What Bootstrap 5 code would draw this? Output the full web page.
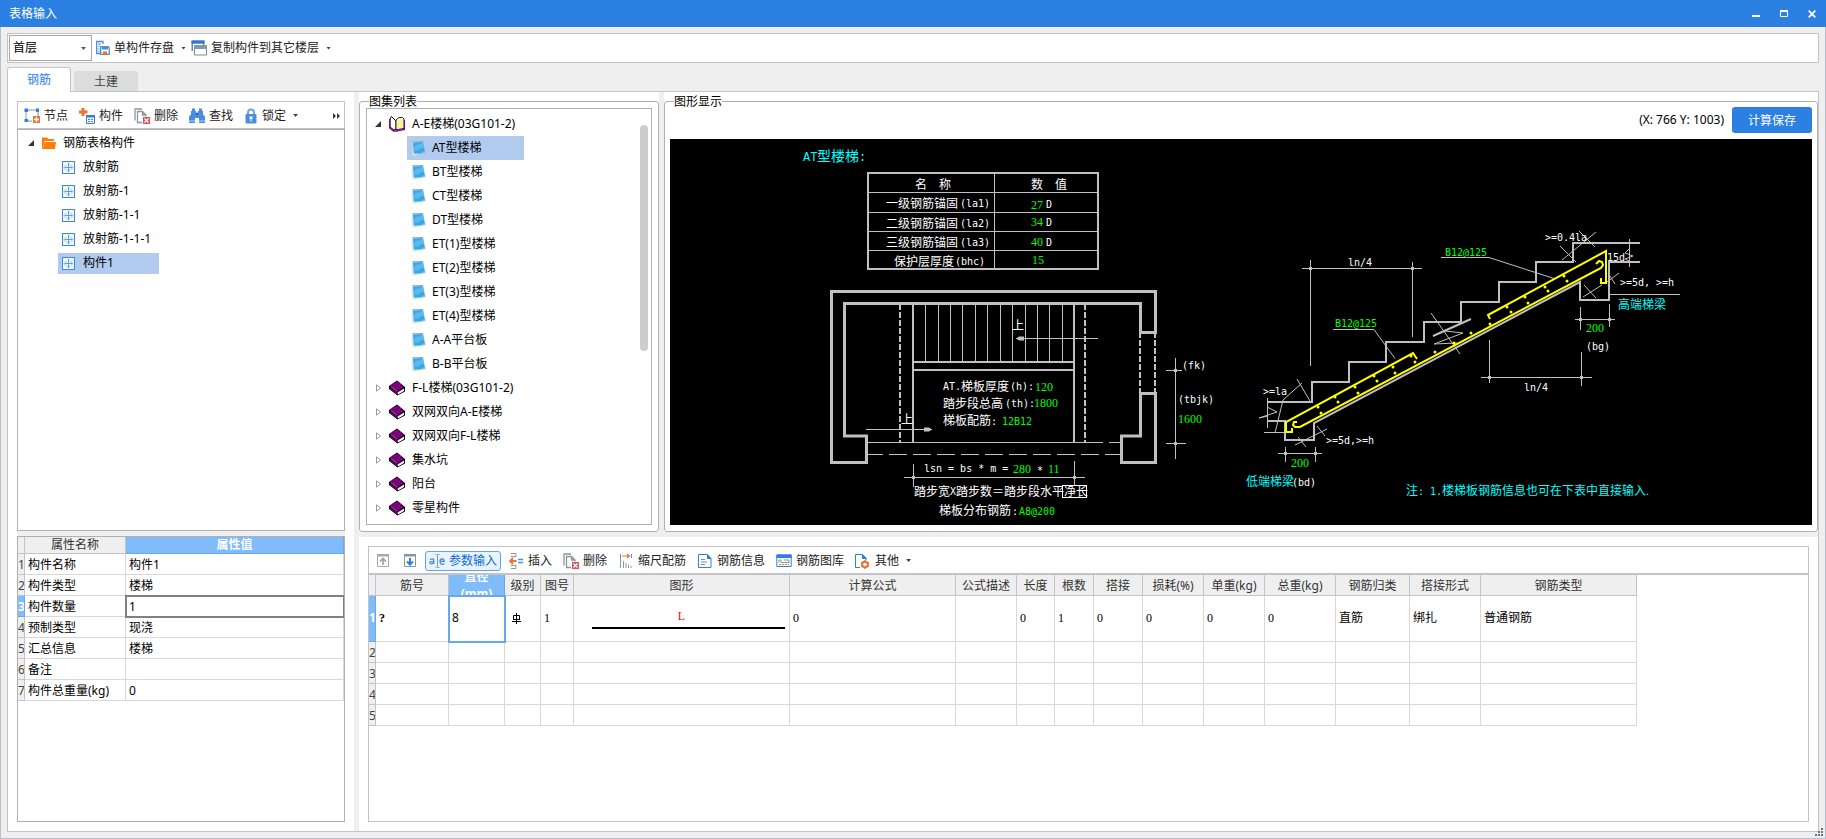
<!DOCTYPE html>
<html lang="zh-CN">
<head>
<meta charset="utf-8">
<meta name="viewport" content="width=device-width, initial-scale=1">
<title>表格输入</title>
<link href="https://cdn.jsdelivr.net/npm/bootstrap@5.3.0/dist/css/bootstrap.min.css" rel="stylesheet">
<style>
  :root { --brand:#2c80e2; --chrome:#efefef; --line:#c3c4c9; --edge:#b0b0b0; --grid:#d8d8d8; --pick:#b1cbee; --head:#80bbfa; }
  html, body { height:100%; }
  body { min-height:700px; font-family:"Noto Sans","Noto Sans CJK SC",sans-serif; font-size:12px; line-height:16px; color:#000; background:var(--chrome); }
  svg { flex:none; display:block; }
  .titlebar { height:27px; background:var(--brand); color:#fff; padding:1px 8px 0 9px; }
  .titlebar h1 { font-size:12px; line-height:16px; font-weight:400; }
  .winbtn { border:0; background:none; color:#fff; padding:0; width:12px; height:16px; display:grid; place-items:center; }
  .frame { border:1px solid #b9bfcf; border-top:0; padding:6px; min-height:0; }
  .topbar { height:30px; border:1px solid var(--line); background:#fff; padding:1px; }
  .floor-pick { width:83px; height:26px; border:1px solid #a8a8a8; border-radius:0; padding:0 16px 0 3px; font-size:12px; line-height:16px; color:#000;
    background:#fff url("data:image/svg+xml,%3Csvg xmlns='http://www.w3.org/2000/svg' width='5' height='3'%3E%3Cpath d='M0 0h5L2.500 3z' fill='%23555'/%3E%3C/svg%3E") no-repeat right 5px center / 5px 3px; }
  .caret { width:5px; height:3px; background:#444; clip-path:polygon(0 0,100% 0,50% 100%); margin-left:3px; }
  .tool { display:flex; align-items:center; gap:4px; height:20px; border:1px solid transparent; border-radius:3px; background:none; padding:0 3px; font-size:12px; line-height:16px; color:#222; white-space:nowrap; }
  .tool.on { border-color:#5ea6f0; background:#e8f3fe; color:#0a6ad8; }
  .toolrow { height:28px; border:1px solid var(--line); background:#fff; padding:1px 2px 0; gap:3px; }
  .tabrow { height:28px; gap:3px; }
  .tabrow .nav-link { font-size:12px; line-height:16px; text-align:center; width:64px; color:#444; background:#dcdcdc; border:0; border-radius:3px 3px 0 0; padding:3px 0 1px; height:20px; }
  .tabrow .nav-link.active { color:var(--brand); background:#fff; border:1px solid var(--line); border-bottom:0; height:25px; margin-bottom:-1px; padding:4px 0; position:relative; }
  .pane { border:1px solid var(--line); min-height:0; }
  .leftcol { width:346px; background:#fff; padding:9px; }
  .vsplit { width:5px; background:var(--chrome); }
  .hsplit { height:5px; background:var(--chrome); }
  .boxed { border:1px solid var(--edge); background:#fff; min-height:0; overflow:hidden; }
  .tree, .tree ul { list-style:none; margin:0; padding:0; }
  .node { display:flex; align-items:center; height:24px; white-space:nowrap; }
  .twist { width:8px; }
  .tree-left { padding-top:1px; }
  .tree-left .node { gap:7px; padding-left:9px; }
  .tree-left ul .node { padding-left:40px; gap:0; }
  .tree-left ul .pickbox { gap:8px; height:21px; padding:0 4px; width:101px; }
  .tree-mid { padding-top:3px; }
  .tree-mid .node { gap:7px; padding-left:7px; }
  .tree-mid ul .node { padding-left:40px; gap:0; }
  .tree-mid ul .pickbox { gap:5px; height:24px; padding:0 4px; width:117px; }
  .pickbox { display:flex; align-items:center; }
  .picked { background:var(--pick); }
  .lowleft { height:286px; }
  .lowright { height:294px; background:#fff; padding:9px; }
  .groupwrap { background:#fff; padding-top:9px; min-height:0; }
  .groupbox { position:relative; border:1px solid var(--edge); border-radius:3px; min-height:0; }
  .grouptitle { position:absolute; top:-8px; left:9px; background:#fff; line-height:16px; }
  .atlas { width:300px; }
  .atlas .groupbox { padding:6px; }
  .thumb { position:absolute; right:3px; top:16px; width:8px; height:226px; border-radius:4px; background:#cdcdcd; }
  .viewer .groupbox { padding:5px 5px 6px; gap:6px; }
  .savebtn { width:80px; height:26px; border:0; border-radius:3px; background:var(--brand); color:#fff; font-size:12px; line-height:16px; padding:1px 0 0; }
  .cad { background:#000; min-height:0; height:0; width:100%; }
  .cad text { font:12px "Liberation Serif","Noto Sans CJK SC",serif; fill:#fff; }
  .cad .mono { font:10px "DejaVu Sans Mono","Noto Sans CJK SC",monospace; }
  .cad .big { font-size:14px; }
  .cad .bigmono { font:12px "Liberation Mono",monospace; }
  .cad .g { fill:#0f0; }
  .cad .c { fill:#0ff; }
  .sheet { border-collapse:separate; border-spacing:0; table-layout:fixed; }
  .sheet th, .sheet td { border:solid var(--grid); border-width:0 1px 1px 0; padding:1px 0 0 3px; height:21px; white-space:nowrap; overflow:hidden; font-weight:400; line-height:16px; text-align:left; }
  .sheet thead th { background:var(--chrome); border-color:var(--line); color:#333; text-align:center; padding:1px 0 0; }
  .sheet tbody th { background:var(--chrome); border-color:var(--line); color:#444; padding:1px 0 0; text-overflow:clip; }
  .sheet thead th.hot, .sheet tbody th.hot { background:var(--head); border-color:#66a8ea; color:#fff; font-weight:700; }
  .sheet thead th.hot { padding:0; }
  .sheet td input { width:100%; border:0; padding:0; font:inherit; line-height:16px; background:none; outline:0; color:#000; display:block; }
  .props { width:100%; }
  .props thead th { height:17px; padding:0; }
  .props .c1 { width:7px; } .props .c2 { width:101px; }
  .props td.now { outline:2px solid #808080; outline-offset:-1px; overflow:visible; }
  .rebar { width:1268px; }
  .rebar td { font-family:"Liberation Serif","Noto Sans CJK SC",serif; color:#000; }
  .rebar tbody tr:first-child > * { height:46px; padding-bottom:2px; }
  .rebar td.now { outline:2px solid #66a8ea; outline-offset:-1px; font-family:"Noto Sans",sans-serif; }
  .clip2 { height:20px; line-height:17px; overflow:hidden; white-space:normal; display:flex; align-items:center; justify-content:center; }
  .w7{width:7px}.w73{width:73px}.w56{width:56px}.w36{width:36px}.w33{width:33px}.w216{width:216px}.w166{width:166px}.w61{width:61px}.w38{width:38px}.w39{width:39px}.w49{width:49px}.w71{width:71px}.w74{width:74px}.w156{width:156px}
  .shape { color:red; text-align:center; margin:0 4px 0 15px; border-bottom:2px solid #000; padding:0 14px 3px 0; }
  .gridtools { height:27px; border-width:0 0 1px; }
  .gridtable { border-top:1px solid var(--line); min-height:0; }
  .grip { position:absolute; right:3px; bottom:3px; }
</style>
</head>
<body class="d-flex flex-column position-relative">

<svg width="0" height="0" class="position-absolute" aria-hidden="true">
  <defs>
    <symbol id="i-store" viewBox="0 0 14 16"><path d="M4 13.500H.7v-12H7V4M2.500 4h2M2.500 6.500h1M2.500 9h1M2.500 11.500h1" fill="none" stroke="#4a8fdc" stroke-width="1.300"/><path d="M4.700 6.700h7.600l1 1v6.600H4.700z" fill="#fff" stroke="#4a8fdc" stroke-width="1.300"/><path d="M6 7h6v2.500H6z" fill="#4a8fdc"/><path d="M7 11.500h4V15H7z" fill="#e8742c"/></symbol>
    <symbol id="i-copy" viewBox="0 0 16 16"><path d="M.5.500h13V5H12V3.500H2V11H.5z" fill="#4a8fdc"/><path d="M.5.500h13v3H.5z" fill="#2f76cc"/><path d="M3.500 5.500h12v9.500h-12z" fill="#fff" stroke="#7f8a90"/><path d="M3 5h13v4H3z" fill="#8c969c"/></symbol>
    <symbol id="i-node" viewBox="0 0 16 16"><path d="M2 2h12v7M8 13H2V2" fill="none" stroke="#8c969c"/><path d="M.5.500H4V4H.5zM12 .5h3V4h-3zM.5 11H4v3H.5z" fill="#2f80dc"/><path d="M9 8h7v7H9z" fill="#ea7430"/><path d="M12.500 9v5M10 11.500h5" stroke="#fff" stroke-width="1.500"/></symbol>
    <symbol id="i-part" viewBox="0 0 16 16"><path d="M2.500 0h3v2.500h3v3h-3V8h-3V5.500H0v-3h2.500z" fill="#ea7430"/><path d="M7.500 7.500h8v8h-8z" fill="#fff" stroke="#2f80dc"/><path d="M7 7h9v2.500H7z" fill="#2f80dc"/><path d="M9 11.500h2M12 11.500h2M9 13.500h2M12 13.500h2" stroke="#2f80dc"/></symbol>
    <symbol id="i-del" viewBox="0 0 16 16"><path d="M1 12.500V1h7M8 14.500H3.500v-11h5L12 7v1.500M8.500 3.500V7H12" fill="none" stroke="#8c969c" stroke-width="1.300"/><path d="M9 9h7v7H9z" fill="#d9525e"/><path d="m10.500 10.500 4 4m0-4-4 4" stroke="#fff" stroke-width="1.200"/></symbol>
    <symbol id="i-find" viewBox="0 0 16 16"><path d="M2 3h1V.5h3V3h1v1.500h2V3h1V.5h3V3h1v3.500l2 2V15h-6v-5H6v5H0V8.500l2-2z" fill="#4a8fdc"/><path d="M7 5h2v2H7z" fill="#1f66bc"/><path d="M0 13h6M10 13h6" stroke="#fff" stroke-width=".6"/></symbol>
    <symbol id="i-lock" viewBox="0 0 14 16"><path d="M4 7V4.500a3 3 0 0 1 6 0V7" fill="none" stroke="#6ca5e4" stroke-width="2"/><rect x="1.500" y="6" width="11" height="9.500" rx="1" fill="#4a8fdc"/><path d="M5.500 8.500h3V11h-1v2.500h-1V11h-1z" fill="#fff"/></symbol>
    <symbol id="i-folder" viewBox="0 0 14 12"><path d="M0 .5h5L6.500 2H12v2H3L1.500 9 1 11.500H0z" fill="#ff7d0c"/><path d="M3 5h11l-1 7H.5z" fill="#ff7d0c"/></symbol>
    <symbol id="i-member" viewBox="0 0 13 13"><rect x=".5" y=".5" width="12" height="12" fill="#f2f8ff" stroke="#3f86dc"/><path d="M6.500 2v9M2.500 6.500h8" stroke="#5b9ae2"/><path d="M4.500 4 2 6.500 4.500 9M8.500 4 11 6.500 8.500 9M5 9l1.500 2L8 9M6.500 2 8 3.500" fill="none" stroke="#7fb2ec" stroke-width=".8"/></symbol>
    <symbol id="i-opened" viewBox="0 0 6 6"><path d="M6 0v6H0z" fill="#333"/></symbol>
    <symbol id="i-closed" viewBox="0 0 6 8"><path d="M1.500.8v6.400L5.500 4z" fill="#fff" stroke="#9a9a9a"/></symbol>
    <symbol id="i-bookopen" viewBox="0 0 16 16"><path d="M1 3 2.500.5 7 5v8L5 14 1 11z" fill="#fff" stroke="#000"/><path d="m7 4 3-2.500h3.500L15 3v9.500l-7 1H7z" fill="#fff" stroke="#222"/><path d="M9 4v8M11 2.500V12M13 3v9" stroke="#f4ee20"/><path d="M.7 3v9l3.800 3H7l8.500-1.500V4" fill="none" stroke="#800080" stroke-width="1.300"/></symbol>
    <symbol id="i-book" viewBox="0 0 16 16"><path d="M0 6 8 .5 16 7v4.500L8.500 15.500 0 9z" fill="#000"/><path d="M1 6 8 1.300 15 7l-6.500 4.500z" fill="#800080"/><path d="m8.500 12.500 6.500-4v2.500l-6 3.500z" fill="#fff"/><path d="m1 7.500 7 5.500v1.500L1 9z" fill="#800080"/><path d="m2 6.500 6 5" stroke="#c890c8" stroke-width=".7"/></symbol>
    <symbol id="i-page" viewBox="0 0 16 16"><path d="M1.500 1.500 12 1l2.500 12-2.500.5H1.500z" fill="#8fb8dc"/><path d="M1.500 1.500H11L11.500 12l-7 3.500h-3z" fill="#c8e8dc"/><path d="m2 2.500 9.500-.5 2 9-4 2.500H3z" fill="#3aa6e6"/><path d="m3 6 9-3.500 1 5-9 4z" fill="#6cc6f0" opacity=".6"/><path d="M1.500 1.500H12" stroke="#8a98a8" stroke-dasharray="1 1"/></symbol>
    <symbol id="i-up" viewBox="0 0 16 16"><path d="M2.500 2.500h11v11h-11z" fill="none" stroke="#a9a9a9"/><path d="M2 1h12v2.500H2z" fill="#a9a9a9"/><path d="M8 12V6M5 8.500 8 5.500l3 3" fill="none" stroke="#a0a0a0" stroke-width="1.600"/></symbol>
    <symbol id="i-down" viewBox="0 0 16 16"><path d="M2.500 2.500h11v11h-11z" fill="none" stroke="#8c969c"/><path d="M2 1h12v2.500H2z" fill="#8c969c"/><path d="M8 5v6.500M5 8.500l3 3 3-3" fill="none" stroke="#2f80dc" stroke-width="2"/></symbol>
    <symbol id="i-ins" viewBox="0 0 16 16"><path d="M3 .5h5v3H3M3 15.500h5v-3H3" fill="none" stroke="#8c969c"/><path d="M10 6.500h5M10 9.500h5" fill="none" stroke="#4a8fdc" stroke-width="1.300"/><path d="M8.500 8H3M5 5 2 8l3 3" fill="none" stroke="#ea7430" stroke-width="1.800"/></symbol>
    <symbol id="i-scale" viewBox="0 0 16 16"><path d="M2.500 5v10M5.500 8v7M8 10v5M10.500 11.500V15M13 13v2" stroke="#8c969c"/><path d="M2.500 1v4M13.500 1v4" stroke="#4a8fdc"/><path d="M4 3h7M9 1l2.500 2L9 5" fill="none" stroke="#ea7430" stroke-width="1.200"/></symbol>
    <symbol id="i-info" viewBox="0 0 16 16"><path d="M1.500 1.500h9l3.500 4v9H1.500z" fill="#fff" stroke="#2f80dc"/><path d="M10 1v5h4.500z" fill="#2f80dc"/><path d="M4 6.500h4M4 9h6M4 11.500h4" stroke="#7f8a90"/></symbol>
    <symbol id="i-lib" viewBox="0 0 16 16"><path d="M.8 2h14.400v11.500H.8z" fill="#fff" stroke="#2f80dc"/><path d="M.5 1.500h15V5H.5z" fill="#2f80dc"/><path d="M3 9.500V7h2v2.500h8V7H8" fill="none" stroke="#8c969c"/><path d="M3 11.500h10" stroke="#ea7430" stroke-dasharray="2 1"/></symbol>
    <symbol id="i-more" viewBox="0 0 16 16"><path d="M5 14.500H.5v-13h7L11 5v2" fill="none" stroke="#2f80dc"/><path d="M7 1v5h5z" fill="#2f80dc"/><circle cx="10" cy="11.500" r="2.800" fill="none" stroke="#ea7430" stroke-width="2"/><path d="M10 7v1.500M10 14.500V16M6 9.500l1.500.7M12.500 12.800l1.500.7M6 13.500l1.500-.7M12.500 10.200l1.500-.7" stroke="#ea7430" stroke-width="1.500"/></symbol>
    <symbol id="i-edit" viewBox="0 0 16 16"><path d="M6.500 1.500h1q1 0 1 1v11q0 1-1 1h-1M10.500 1.500h-1q-1 0-1 1v11q0 1 1 1h1" fill="none" stroke="#8c969c"/><path d="M.8 6.500q4-1.500 4 1V11M4.800 8.300C2 8.300.6 8.800.8 10s2.600 1.400 4-.6" fill="none" stroke="#4a8fdc" stroke-width="1.300"/><path d="M11.200 8.400h4C15 5.200 11 5.200 11 8.500s3 3.200 4.200 2" fill="none" stroke="#4a8fdc" stroke-width="1.300"/></symbol>
  </defs>
</svg>

<header class="titlebar d-flex align-items-center justify-content-between">
  <h1 class="m-0">表格输入</h1>
  <div class="d-flex gap-3">
    <button class="winbtn" type="button" aria-label="最小化"><svg width="8" height="8" viewBox="0 0 8 8"><path d="M0 6h8" stroke="#fff" stroke-width="2"/></svg></button>
    <button class="winbtn" type="button" aria-label="最大化"><svg width="8" height="8" viewBox="0 0 8 8"><path d="M.5 1h7v5.500h-7z" fill="none" stroke="#fff"/><path d="M0 1h8" stroke="#fff" stroke-width="2"/></svg></button>
    <button class="winbtn" type="button" aria-label="关闭"><svg width="8" height="8" viewBox="0 0 8 8"><path d="m.7.700 6.600 6.600m0-6.600L.7 7.300" stroke="#fff" stroke-width="1.800"/></svg></button>
  </div>
</header>

<div class="frame flex-fill d-flex flex-column">
  <div class="topbar d-flex align-items-center">
    <select class="floor-pick form-select" aria-label="楼层"><option>首层</option></select>
    <button type="button" class="tool pe-0"><svg width="14" height="16"><use href="#i-store"/></svg>单构件存盘<span class="caret"></span></button>
    <button type="button" class="tool pe-0"><svg width="16" height="16"><use href="#i-copy"/></svg>复制构件到其它楼层<span class="caret"></span></button>
  </div>

  <nav class="tabrow d-flex align-items-end">
    <button type="button" class="nav-link active">钢筋</button>
    <button type="button" class="nav-link">土建</button>
  </nav>

  <main class="pane flex-fill d-flex">
    <section class="leftcol d-flex flex-column flex-shrink-0">
      <div class="toolrow d-flex align-items-center">
        <button type="button" class="tool"><svg width="16" height="16"><use href="#i-node"/></svg>节点</button>
        <button type="button" class="tool"><svg width="16" height="16"><use href="#i-part"/></svg>构件</button>
        <button type="button" class="tool"><svg width="16" height="16"><use href="#i-del"/></svg>删除</button>
        <button type="button" class="tool"><svg width="16" height="16"><use href="#i-find"/></svg>查找</button>
        <button type="button" class="tool"><svg width="14" height="16"><use href="#i-lock"/></svg>锁定<span class="caret"></span></button>
        <button type="button" class="tool ms-auto px-0" aria-label="更多"><svg width="8" height="6" viewBox="0 0 8 6"><path d="M0 0v6l3-3zM4 0v6l3-3z" fill="#333"/></svg></button>
      </div>
      <div class="boxed flex-fill">
        <ul class="tree tree-left">
          <li><div class="node"><svg class="twist" width="6" height="6"><use href="#i-opened"/></svg><svg width="14" height="12"><use href="#i-folder"/></svg>钢筋表格构件</div>
            <ul>
              <li class="node"><span class="pickbox"><svg width="13" height="13"><use href="#i-member"/></svg>放射筋</span></li>
              <li class="node"><span class="pickbox"><svg width="13" height="13"><use href="#i-member"/></svg>放射筋-1</span></li>
              <li class="node"><span class="pickbox"><svg width="13" height="13"><use href="#i-member"/></svg>放射筋-1-1</span></li>
              <li class="node"><span class="pickbox"><svg width="13" height="13"><use href="#i-member"/></svg>放射筋-1-1-1</span></li>
              <li class="node"><span class="pickbox picked"><svg width="13" height="13"><use href="#i-member"/></svg>构件1</span></li>
            </ul>
          </li>
        </ul>
      </div>
      <div class="hsplit"></div>
      <div class="boxed lowleft flex-shrink-0">
        <table class="sheet props">
          <colgroup><col class="c1"><col class="c2"><col></colgroup>
          <thead><tr><th></th><th>属性名称</th><th class="hot">属性值</th></tr></thead>
          <tbody>
            <tr><th>1</th><td>构件名称</td><td>构件1</td></tr>
            <tr><th>2</th><td>构件类型</td><td>楼梯</td></tr>
            <tr><th class="hot">3</th><td>构件数量</td><td class="now"><input type="text" value="1" aria-label="构件数量"></td></tr>
            <tr><th>4</th><td>预制类型</td><td>现浇</td></tr>
            <tr><th>5</th><td>汇总信息</td><td>楼梯</td></tr>
            <tr><th>6</th><td>备注</td><td></td></tr>
            <tr><th>7</th><td>构件总重量(kg)</td><td>0</td></tr>
          </tbody>
        </table>
      </div>
    </section>
    <div class="vsplit flex-shrink-0"></div>

    <div class="flex-fill d-flex flex-column" style="min-width:0">
      <div class="flex-fill d-flex" style="min-height:0">
        <section class="groupwrap atlas d-flex flex-column flex-shrink-0">
          <div class="groupbox flex-fill d-flex flex-column">
            <span class="grouptitle">图集列表</span>
            <div class="boxed flex-fill position-relative">
              <ul class="tree tree-mid">
                <li><div class="node"><svg class="twist" width="6" height="6"><use href="#i-opened"/></svg><svg width="16" height="16"><use href="#i-bookopen"/></svg>A-E楼梯(03G101-2)</div>
                  <ul>
                    <li class="node"><span class="pickbox picked"><svg width="16" height="16"><use href="#i-page"/></svg>AT型楼梯</span></li>
                    <li class="node"><span class="pickbox"><svg width="16" height="16"><use href="#i-page"/></svg>BT型楼梯</span></li>
                    <li class="node"><span class="pickbox"><svg width="16" height="16"><use href="#i-page"/></svg>CT型楼梯</span></li>
                    <li class="node"><span class="pickbox"><svg width="16" height="16"><use href="#i-page"/></svg>DT型楼梯</span></li>
                    <li class="node"><span class="pickbox"><svg width="16" height="16"><use href="#i-page"/></svg>ET(1)型楼梯</span></li>
                    <li class="node"><span class="pickbox"><svg width="16" height="16"><use href="#i-page"/></svg>ET(2)型楼梯</span></li>
                    <li class="node"><span class="pickbox"><svg width="16" height="16"><use href="#i-page"/></svg>ET(3)型楼梯</span></li>
                    <li class="node"><span class="pickbox"><svg width="16" height="16"><use href="#i-page"/></svg>ET(4)型楼梯</span></li>
                    <li class="node"><span class="pickbox"><svg width="16" height="16"><use href="#i-page"/></svg>A-A平台板</span></li>
                    <li class="node"><span class="pickbox"><svg width="16" height="16"><use href="#i-page"/></svg>B-B平台板</span></li>
                  </ul>
                </li>
                <li class="node"><svg class="twist" width="6" height="8"><use href="#i-closed"/></svg><svg width="16" height="16"><use href="#i-book"/></svg>F-L楼梯(03G101-2)</li>
                <li class="node"><svg class="twist" width="6" height="8"><use href="#i-closed"/></svg><svg width="16" height="16"><use href="#i-book"/></svg>双网双向A-E楼梯</li>
                <li class="node"><svg class="twist" width="6" height="8"><use href="#i-closed"/></svg><svg width="16" height="16"><use href="#i-book"/></svg>双网双向F-L楼梯</li>
                <li class="node"><svg class="twist" width="6" height="8"><use href="#i-closed"/></svg><svg width="16" height="16"><use href="#i-book"/></svg>集水坑</li>
                <li class="node"><svg class="twist" width="6" height="8"><use href="#i-closed"/></svg><svg width="16" height="16"><use href="#i-book"/></svg>阳台</li>
                <li class="node"><svg class="twist" width="6" height="8"><use href="#i-closed"/></svg><svg width="16" height="16"><use href="#i-book"/></svg>零星构件</li>
              </ul>
              <span class="thumb"></span>
            </div>
          </div>
        </section>
        <div class="vsplit flex-shrink-0"></div>

        <section class="groupwrap viewer flex-fill d-flex flex-column">
          <div class="groupbox flex-fill d-flex flex-column">
            <span class="grouptitle">图形显示</span>
            <div class="d-flex align-items-center justify-content-end gap-2">
              <span>(X: 766 Y: 1003)</span>
              <button type="button" class="savebtn">计算保存</button>
            </div>
            <svg class="cad flex-fill" viewBox="670 139 1142 386" role="img" aria-label="AT型楼梯">
              <g fill="none" stroke="#c0c0c0">
                <g stroke-width="2">
                  <path d="M868 173h230v96H868z"/>
                  <path d="M913 304v138M1074 304v138M913 362h161M913 370h161"/>
                  <path d="M900 304v138M1085 304v138M1140 332v62M1155 332v62" stroke-dasharray="6 2"/>
                  <path d="M1268 402h44v-20h37v-20h37v-20h38v-20h37v-20h38v-20h37v-20h37v-19h67"/>
                  <path d="M1268 421h17v19h29v-17L1580 282v18h29v-38h31M1433 336l38-17"/>
                </g>
                <g stroke-width="3">
                  <path d="M1155.500 333v-41.500h-324v171h35V436h-22V303.500h296v29h16.500"/>
                  <path d="M1140.500 393.500h15v69h-34V436h19z"/>
                </g>
                <path d="M994.500 173v96M868 192.500h230M868 212.500h230M868 231.500h230M868 250.500h230"/>
                <path d="M925.500 304v58M938.500 304v58M950.500 304v58M962.500 304v58M975.500 304v58M987.500 304v58M1000.500 304v58M1012.500 304v58M1025.500 304v58M1037.500 304v58M1049.500 304v58M1062.500 304v58"/>
                <path d="M867 442.500h236M1109 442.500h12"/>
                <path d="M867 454.500h254" stroke-dasharray="18 6" stroke-dashoffset="2"/>
                <path d="M1016 338.500h82M866 429.500h66"/>
                <path d="M904 477.500h181M913.500 464v23M1074.500 461v24M1175.500 358v101M1166 370.500h16M1166 443.500h20"/>
                <path d="M1302 268.500h120M1310.500 260v106M1412.500 262v75M1333 329.500h41l21 29M1441 257.500h48l65 21"/>
                <path d="M1481 377.500h111M1489.500 340v43M1581.500 352v34M1575 319.500h40M1580.500 307v23M1609.500 304v23M1610 294.500h70"/>
                <path d="M1278 453.500h44M1285.500 447v15M1315.500 447v15"/>
                <path d="m1431 313 29 41M1445 331l18 2-29 11 23-1"/>
                <path d="M1267.500 398v30M1259 418l18-6-10-5M1259 418l9-2M1264 432.500h20M1297 379l13 22M1302 383l-19 17-8 33"/>
                <path d="m1295 445 32-16M1298 437l8 10M1317 426l8 10"/>
                <path d="m1560 246 16 16M1562 260l34-28M1579 231l16 16M1629.500 239v28M1629 249l-4 4 8 3-8 3 4 2"/>
                <path d="m1608 273 7 11M1619 273l-12 9M1583 297l19-12M1584 285l12 13"/>
              </g>
              <path d="m1016 338.500 3-2h5v4h-5zM932 429.500l-3-2h-5v4h5z" fill="#c0c0c0"/>
              <path d="M912 477.500h3M1073 477.500h3M1174 370.500h3M1174 443.500h3M1309 268.500h3M1411 268.500h3M1488 377.500h3M1580 377.500h3M1579 319.500h3M1608 319.500h3M1284 453.500h3M1314 453.500h3" stroke="#c0c0c0" stroke-width="3"/>
              <g fill="none" stroke="#ff0" stroke-width="2">
                <path d="M1297 422h-3l-1 3 2 2h5L1601 268l2-3-1-3-3-1-3 3"/>
                <path d="M1292 428v4h-6v-10l127-69 4 6"/>
                <path d="m1490 319-2-4 118-64v32h-5v-5"/>
                <path stroke-width="3" stroke-linecap="round" d="M1321 413h0M1338 402h0M1358 393h0M1377 381h0M1395 373h0M1415 362h0M1435 352h0M1454 343h0M1471 333h0M1490 324h0M1511 312h0M1528 303h0M1548 291h0M1567 281h0M1318 407h0M1335 397h0M1355 387h0M1374 376h0M1393 367h0M1411 356h0M1507 307h0M1525 297h0M1545 287h0M1564 276h0"/>
              </g>
              <rect x="1062.500" y="485.500" width="24" height="12" fill="none" stroke="#fff"/>
              <text class="bigmono c" x="803" y="161">AT</text><text class="big c" x="817" y="161">型楼梯</text><text class="bigmono c" x="859" y="161">:</text>
              <text x="915" y="189">名</text><text x="939" y="189">称</text><text x="1031" y="189">数</text><text x="1055" y="189">值</text>
              <text x="886" y="208">一级钢筋锚固</text><text class="mono" x="960" y="207">(la1)</text>
              <text x="886" y="228">二级钢筋锚固</text><text class="mono" x="960" y="227">(la2)</text>
              <text x="886" y="247">三级钢筋锚固</text><text class="mono" x="960" y="246">(la3)</text>
              <text x="894" y="266">保护层厚度</text><text class="mono" x="955" y="265">(bhc)</text>
              <text class="g" x="1031" y="209">27</text><text class="mono" x="1046" y="208">D</text>
              <text class="g" x="1031" y="226">34</text><text class="mono" x="1046" y="226">D</text>
              <text class="g" x="1031" y="246">40</text><text class="mono" x="1046" y="246">D</text>
              <text class="g" x="1032" y="264">15</text>
              <text x="1012" y="330">上</text><text x="901" y="424">上</text>
              <text class="mono" x="943" y="390">AT.</text><text x="961" y="391">梯板厚度</text><text class="mono" x="1010" y="390">(h):</text><text class="g" x="1035" y="391">120</text>
              <text x="943" y="408">踏步段总高</text><text class="mono" x="1005" y="407">(th):</text><text class="g" x="1034" y="407">1800</text>
              <text x="943" y="425">梯板配筋</text><text class="mono" x="991" y="425">:</text><text class="mono g" x="1002" y="425">12B12</text>
              <text class="mono" x="924" y="472">lsn = bs * m =</text><text class="g" x="1013" y="473">280</text><text class="mono" x="1037" y="474">*</text><text class="g" x="1048" y="473">11</text>
              <text x="914" y="496">踏步宽</text><text class="mono" x="950" y="495">X</text><text x="956" y="496">踏步数＝踏步段水平净长</text>
              <text x="939" y="515">梯板分布钢筋</text><text class="mono" x="1012" y="515">:</text><text class="mono g" x="1019" y="515">A8@200</text>
              <text class="mono" x="1182" y="369">(fk)</text><text class="mono" x="1178" y="403">(tbjk)</text><text class="g" x="1178" y="423">1600</text>
              <text class="mono" x="1348" y="266">ln/4</text><text class="mono" x="1524" y="391">ln/4</text>
              <text class="mono g" x="1335" y="327">B12@125</text><text class="mono g" x="1445" y="256">B12@125</text>
              <text class="mono" x="1263" y="395">&gt;=la</text><text class="mono" x="1326" y="444">&gt;=5d,</text><text class="mono" x="1356" y="444">&gt;=h</text>
              <text class="g" x="1291" y="467">200</text><text class="g" x="1586" y="332">200</text>
              <text class="c" x="1246" y="486">低端梯梁</text><text class="mono" x="1292" y="486">(bd)</text>
              <text class="c" x="1406" y="495">注</text><text class="mono c" x="1418" y="495">:</text><text class="mono c" x="1430" y="495">1.</text><text class="c" x="1442" y="495">楼梯板钢筋信息也可在下表中直接输入.</text>
              <text class="mono" x="1545" y="241">&gt;=0.4la</text><text class="mono" x="1607" y="261">15d</text>
              <text class="mono" x="1620" y="286">&gt;=5d,</text><text class="mono" x="1656" y="286">&gt;=h</text>
              <text class="c" x="1618" y="309">高端梯梁</text><text class="mono" x="1586" y="350">(bg)</text>
            </svg>
          </div>
        </section>
      </div>
      <div class="hsplit flex-shrink-0"></div>

      <section class="lowright flex-shrink-0">
        <div class="h-100 border d-flex flex-column" style="--bs-border-color:var(--line)">
          <div class="toolrow gridtools d-flex align-items-center">
            <button type="button" class="tool" aria-label="上移"><svg width="16" height="16"><use href="#i-up"/></svg></button>
            <button type="button" class="tool" aria-label="下移"><svg width="16" height="16"><use href="#i-down"/></svg></button>
            <button type="button" class="tool on"><svg width="16" height="16"><use href="#i-edit"/></svg>参数输入</button>
            <button type="button" class="tool"><svg width="16" height="16"><use href="#i-ins"/></svg>插入</button>
            <button type="button" class="tool"><svg width="16" height="16"><use href="#i-del"/></svg>删除</button>
            <button type="button" class="tool"><svg width="16" height="16"><use href="#i-scale"/></svg>缩尺配筋</button>
            <button type="button" class="tool"><svg width="16" height="16"><use href="#i-info"/></svg>钢筋信息</button>
            <button type="button" class="tool"><svg width="16" height="16"><use href="#i-lib"/></svg>钢筋图库</button>
            <button type="button" class="tool"><svg width="16" height="16"><use href="#i-more"/></svg>其他<span class="caret"></span></button>
          </div>
          <div class="gridtable flex-fill overflow-auto">
            <table class="sheet rebar">
              <colgroup><col class="w7"><col class="w73"><col class="w56"><col class="w36"><col class="w33"><col class="w216"><col class="w166"><col class="w61"><col class="w38"><col class="w39"><col class="w49"><col class="w61"><col class="w61"><col class="w71"><col class="w74"><col class="w71"><col class="w156"></colgroup>
              <thead><tr><th></th><th>筋号</th><th class="hot"><div class="clip2">直径<br>(mm)</div></th><th>级别</th><th>图号</th><th>图形</th><th>计算公式</th><th>公式描述</th><th>长度</th><th>根数</th><th>搭接</th><th>损耗(%)</th><th>单重(kg)</th><th>总重(kg)</th><th>钢筋归类</th><th>搭接形式</th><th>钢筋类型</th></tr></thead>
              <tbody>
                <tr><th class="hot">1</th><td><b>?</b></td><td class="now"><input type="text" value="8" aria-label="直径"></td><td><svg class="ms-1" width="9" height="11" viewBox="0 0 9 11" role="img" aria-label="三级钢"><path d="M4.500 0v11M1.500 2.500h6v4h-6zM0 8.500h9M1 6.500h7" fill="none" stroke="#000"/></svg></td><td>1</td><td><div class="shape">L</div></td><td>0</td><td></td><td>0</td><td>1</td><td>0</td><td>0</td><td>0</td><td>0</td><td>直筋</td><td>绑扎</td><td>普通钢筋</td></tr>
                <tr><th>2</th><td></td><td></td><td></td><td></td><td></td><td></td><td></td><td></td><td></td><td></td><td></td><td></td><td></td><td></td><td></td><td></td></tr>
                <tr><th>3</th><td></td><td></td><td></td><td></td><td></td><td></td><td></td><td></td><td></td><td></td><td></td><td></td><td></td><td></td><td></td><td></td></tr>
                <tr><th>4</th><td></td><td></td><td></td><td></td><td></td><td></td><td></td><td></td><td></td><td></td><td></td><td></td><td></td><td></td><td></td><td></td></tr>
                <tr><th>5</th><td></td><td></td><td></td><td></td><td></td><td></td><td></td><td></td><td></td><td></td><td></td><td></td><td></td><td></td><td></td><td></td></tr>
              </tbody>
            </table>
          </div>
        </div>
      </section>
    </div>
  </main>
</div>
<svg class="grip" width="8" height="8" viewBox="0 0 8 8" aria-hidden="true"><path d="M6 0h2v2H6zM3 3h2v2H3zM6 3h2v2H6zM0 6h2v2H0zM3 6h2v2H3zM6 6h2v2H6z" fill="#6b7580"/></svg>
<script src="https://cdn.jsdelivr.net/npm/bootstrap@5.3.0/dist/js/bootstrap.bundle.min.js"></script>
</body>
</html>
